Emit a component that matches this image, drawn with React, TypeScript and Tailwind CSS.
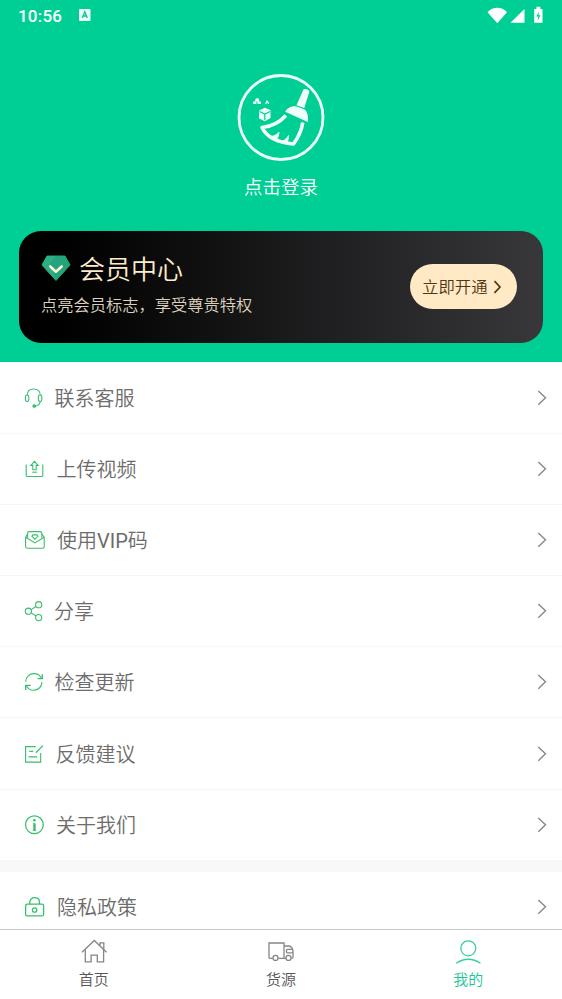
import type { ReactNode } from 'react';

interface MenuItem {
  name: string;
  label: ReactNode;
  icon: ReactNode;
  gap: string;
}

const HeadsetIcon = () => (
  <>
    <path d="M5 9.5C5.2 5.4 8 3 11.7 3s6.5 2.4 6.7 6.5" />
    <rect x="3.4" y="9" width="3.4" height="6.5" rx="1.7" />
    <rect x="16.4" y="9" width="3.4" height="6.5" rx="1.7" />
    <path d="M18.2 15.5c-.3 2.7-2 4.2-5 4.6" />
    <circle cx="12.2" cy="20" r="1.3" fill="currentColor" />
  </>
);

const UploadIcon = () => (
  <>
    <path d="M4.2 7.5v10.7c0 .8.5 1.3 1.3 1.3h14c.8 0 1.3-.5 1.3-1.3V7.5" />
    <path d="M12.5 4.3 8.8 8.4h2v4.3h3.4V8.4h2z" />
    <path d="M10.3 15.2h4.6" />
  </>
);

const VipMailIcon = () => (
  <>
    <path d="M5.6 9.8V5.1c0-.9.6-1.5 1.500-1.5h11.200c.9 0 1.500.6 1.500 1.500v4.700" />
    <path d="M5.600 6 3.600 9.300v9.200c0 1.100.7 1.800 1.800 1.800h15c1.100 0 1.800-.7 1.800-1.800V9.300l-2.200-3.100" />
    <path d="m3.700 9.200 9.200 5.700 9.200-5.700" />
    <path d="m10.900 6.900-1 1.400 3 2.900 3-2.900-1-1.400z" />
  </>
);

const ShareIcon = () => (
  <>
    <circle cx="6.4" cy="12.2" r="3.1" />
    <circle cx="16.7" cy="5.7" r="3.1" />
    <circle cx="16.7" cy="18.6" r="3.1" />
    <path d="m9.1 10.6 4.9-3.1M9.1 13.9l4.9 3.1" />
  </>
);

const RefreshIcon = () => (
  <>
    <path d="M3.6 11.8C3.8 7 7.4 3.6 12 3.6c3.4 0 6.2 1.8 7.6 4.8M20 12.1c-.3 4.8-3.8 8.2-8.4 8.2-3.3 0-5.9-1.7-7.4-4.5" />
    <path d="M20.3 4.3v4.3h-4.6M3.7 19.9v-4.5h5" strokeWidth="1.3" />
  </>
);

const FeedbackIcon = () => (
  <>
    <path d="M13.8 4.6H3.6v15.5h15.1V11" />
    <path d="M7.3 9.3h3.8M6.6 14.8h8.6" strokeWidth="1.3" />
    <path d="m13.9 10.8 7-7.2" strokeWidth="1.3" />
  </>
);

const InfoIcon = () => (
  <>
    <circle cx="12.4" cy="11.8" r="8.9" strokeWidth="1.3" />
    <path d="M12.5 10.400v7.400" strokeWidth="2.4" />
    <path d="M10.9 10.3h1.6M10.8 17.4h3.4" strokeWidth=".8" />
    <circle cx="12.4" cy="7.3" r="1.3" fill="currentColor" stroke="none" />
  </>
);

const LockIcon = () => (
  <>
    <rect x="3.6" y="9.2" width="18" height="11.7" rx="1.5" strokeWidth="1.3" />
    <path d="M7.8 9V7.1c0-2.6 2-4.4 4.8-4.4s4.8 1.8 4.8 4.4V9" strokeWidth="1.3" />
    <circle cx="12.6" cy="15" r="2.2" strokeWidth="1.3" />
  </>
);

const mainItems: MenuItem[] = [
  { name: 'service', label: '联系客服', icon: <HeadsetIcon />, gap: 'pl-[8.5px]' },
  { name: 'upload', label: '上传视频', icon: <UploadIcon />, gap: 'pl-[10.5px]' },
  { name: 'vip', label: <>使用<span className="font-normal">VIP</span>码</>, icon: <VipMailIcon />, gap: 'pl-[11px]' },
  { name: 'share', label: '分享', icon: <ShareIcon />, gap: 'pl-[8px]' },
  { name: 'update', label: '检查更新', icon: <RefreshIcon />, gap: 'pl-[8.5px]' },
  { name: 'feedback', label: '反馈建议', icon: <FeedbackIcon />, gap: 'pl-[9.5px]' },
  { name: 'about', label: '关于我们', icon: <InfoIcon />, gap: 'pl-[10px]' },
];

const privacyItem: MenuItem = { name: 'privacy', label: '隐私政策', icon: <LockIcon />, gap: 'pl-[11px]' };

const MenuRow = ({ item }: { item: MenuItem }) => (
  <div className="flex h-[71.1px] shrink-0 items-center border-b border-[#f6f6f6] pl-[22px] pr-[14px]">
    <svg width="24" height="24" viewBox="0 0 24 24" fill="none" stroke="currentColor" strokeWidth="1.1" className="shrink-0 text-[#36bf6d]">
      {item.icon}
    </svg>
    <span className={`flex-1 pt-[2px] text-[20px] leading-none text-[#6c6c6c] ${item.gap}`}>{item.label}</span>
    <svg width="12" height="18" viewBox="0 0 12 18" fill="none" stroke="#888" strokeWidth="1.4">
      <path d="m2.3 1.900 7.200 6.900-7.200 6.900" />
    </svg>
  </div>
);

const StatusBar = () => (
  <div className="flex h-[31px] items-center pl-[18px] pr-[17px] text-white">
    <span className="w-[61px] pt-px font-[Roboto] text-[17px] font-medium leading-none tracking-[0.2px]">10:56</span>
    <svg width="12" height="12" viewBox="0 0 12 12" className="mb-px">
      <rect width="11.5" height="12" rx="1" fill="#f0fffa" />
      <path d="m3.3 8.9 2.5-6.2 2.5 6.2M4.2 7h3.2" fill="none" stroke="#00c88f" strokeWidth="1.3" />
    </svg>
    <div className="flex-1" />
    <svg width="58" height="18" viewBox="0 0 58 18" fill="white" className="mb-[2px]">
      <path d="M.5 6.2C6 .3 14.5.3 20 6.2L10.300 17.300z" />
      <path d="M37.5 3v13.7H23.5z" />
      <path d="M47.2 3h2.3V.8h3.800V3h2.200v13.700h-8.300z" />
      <path d="m52 5.5-2.7 5h2l-.7 4.200 2.900-5.500h-2z" fill="#00cd94" />
    </svg>
  </div>
);

const BroomLogo = () => (
  <svg width="88" height="88" viewBox="0 0 88 88" fill="none">
    <circle cx="44" cy="44.5" r="42" stroke="#eefff9" strokeWidth="2.8" />
    <g fill="#f1fffa">
      <path d="M66.4 16.6c.8-1.7 6.4.2 5.9 2.1L67.3 35l-7.8-2.7z" />
      <path d="M48.2 38.700c2-3.900 6.800-6.200 11.300-5.300l7.800 2.900c3.200 2.700 4.300 7.200 3.500 12.700z" />
      <path d="m22.1 37.5 5.7-2.8 5.7 2.4v7.8l-5.7 3.3-5.7-2.8z" />
      <path d="m18.3 26 1.9-1 1.900 1v2.400h-3.800zM16.200 28.500h3.200v2.600h-3.200zM20.500 28.500h3.300v2.600h-3.300z" />
      <path d="m28 31 1.500-3.500h1l2 3.500h-1.300l-.9-1.500-1.100 1.500z" />
    </g>
    <path d="m22.6 38.5 5.2 2.5 5.3-2.5M27.800 41v6" stroke="#00cd94" strokeWidth="1.2" />
    <path d="M49 42.5c-6.500 7-14 11-24 12 4.500 9.500 15 15 31.500 16.500 4.700-6.500 8.200-13.200 9.200-21.500" stroke="#f1fffa" strokeWidth="3.6" strokeLinejoin="round" />
    <path d="M33.5 63.5c3.500-.3 6-1.500 8.500-4.500-.1 2.700-.7 4.700-2 7zM45.500 68c2.500-1 4.300-2.700 6-5.500.1 2.700-.3 4.700-1.500 7z" fill="#f1fffa" stroke="#f1fffa" strokeWidth=".8" />
  </svg>
);

const MemberCard = () => (
  <div className="mx-[19px] flex h-[112.5px] items-center justify-between rounded-[22px] bg-linear-to-r/srgb from-black from-8% to-[#38373a] pl-[22px] pr-[26px]">
    <div className="flex flex-col pb-[7px]">
      <div className="flex h-[38px] items-center">
        <svg width="30" height="28" viewBox="0 0 30 28" fill="none" className="mb-[2px]">
          <path d="M6 2h18l5 9-14 15.500L1 11z" fill="#22a57c" stroke="#22a57c" strokeLinejoin="round" />
          <path d="M6 2h9L9 9l6 17.500L1 11z" fill="#32b68d" opacity=".6" />
          <path d="m9.200 12.500 5.700 5.200 5.800-5.200" stroke="#fff1d5" strokeWidth="2.6" strokeLinecap="round" strokeLinejoin="round" />
        </svg>
        <span className="pl-[8px] pt-px text-[26px] leading-none text-[#ffebca]">会员中心</span>
      </div>
      <span className="mt-[8px] text-[16.25px] leading-[20px] text-[#dbd1bd]">点亮会员标志，享受尊贵特权</span>
    </div>
    <button className="flex h-[45px] w-[107px] items-center rounded-full bg-[#ffeac5] pl-[12px] text-[16.4px] font-[350] leading-none text-[#503615]">
      <span className="pt-[2px]">立即开通</span>
      <svg width="10" height="14" viewBox="0 0 10 14" fill="none" stroke="currentColor" strokeWidth="1.7" className="ml-[5px]">
        <path d="m1.5 1.200 5.500 5.800-5.500 5.800" />
      </svg>
    </button>
  </div>
);

const HomeIcon = () => (
  <>
    <path d="M2 14.200 14.300 2.500l12.200 11.700M20 7.600V4.800h3.800v6.600" />
    <path d="M5.300 11.500v12.300h5.800v-6.600h6.200v6.600h6.300V11.500" />
  </>
);

const TruckIcon = () => (
  <>
    <path d="M5.600 20.400H3.500c-1 0-1.500-.5-1.500-1.500V5h15v15.400h-5.600M17 8h5c2.300 0 4 3.200 4 6v4.900c0 1-.5 1.500-1.500 1.500M17 20.400h2" />
    <path d="M25.300 11.300h-4.800c-.6 0-1 .4-1 1v1.500c0 .6.4 1 1 1h5.300" />
    <circle cx="8.5" cy="19.9" r="2.5" />
    <circle cx="21.5" cy="19.9" r="2.5" />
  </>
);

const UserIcon = () => (
  <>
    <circle cx="14.3" cy="10.3" r="7.5" />
    <path d="M2.2 25.200c7.500-5 16.500-5 24.300 0" />
  </>
);

const tabs = [
  { label: '首页', icon: <HomeIcon />, iconColor: 'text-[#858585]', textColor: 'text-[#555]' },
  { label: '货源', icon: <TruckIcon />, iconColor: 'text-[#858585]', textColor: 'text-[#555]' },
  { label: '我的', icon: <UserIcon />, iconColor: 'text-[#35cfa1]', textColor: 'text-[#19c794]' },
];

const TabBar = () => (
  <div className="grid h-[70px] shrink-0 grid-cols-3 border-t border-[#c9c9c9] bg-white">
    {tabs.map((tab) => (
      <div key={tab.label} className="flex flex-col items-center pt-[8px]">
        <svg width="28" height="28" viewBox="0 0 28 28" fill="none" stroke="currentColor" strokeWidth="1.3" className={tab.iconColor}>
          {tab.icon}
        </svg>
        <span className={`mt-[6px] text-[15px] leading-[16px] ${tab.textColor}`}>{tab.label}</span>
      </div>
    ))}
  </div>
);

const App = () => {
  return (
    <div className="flex h-[999px] w-[562px] flex-col overflow-hidden bg-white font-[Roboto,'Noto_Sans_CJK_SC',sans-serif] font-[350]">
      <header className="h-[361.5px] shrink-0 bg-[#00cf95]">
        <StatusBar />
        <div className="flex h-[199.5px] flex-col items-center pt-[42px]">
          <BroomLogo />
          <span className="mt-[15px] text-[18.5px] leading-[24px] text-white">点击登录</span>
        </div>
        <MemberCard />
      </header>
      <main className="flex flex-1 flex-col overflow-hidden pt-[1.5px]">
        {mainItems.map((item) => (
          <MenuRow key={item.name} item={item} />
        ))}
        <div className="h-[11.5px] shrink-0 bg-[#f8f8f8]" />
        <MenuRow item={privacyItem} />
      </main>
      <TabBar />
    </div>
  );
};

export default App;
